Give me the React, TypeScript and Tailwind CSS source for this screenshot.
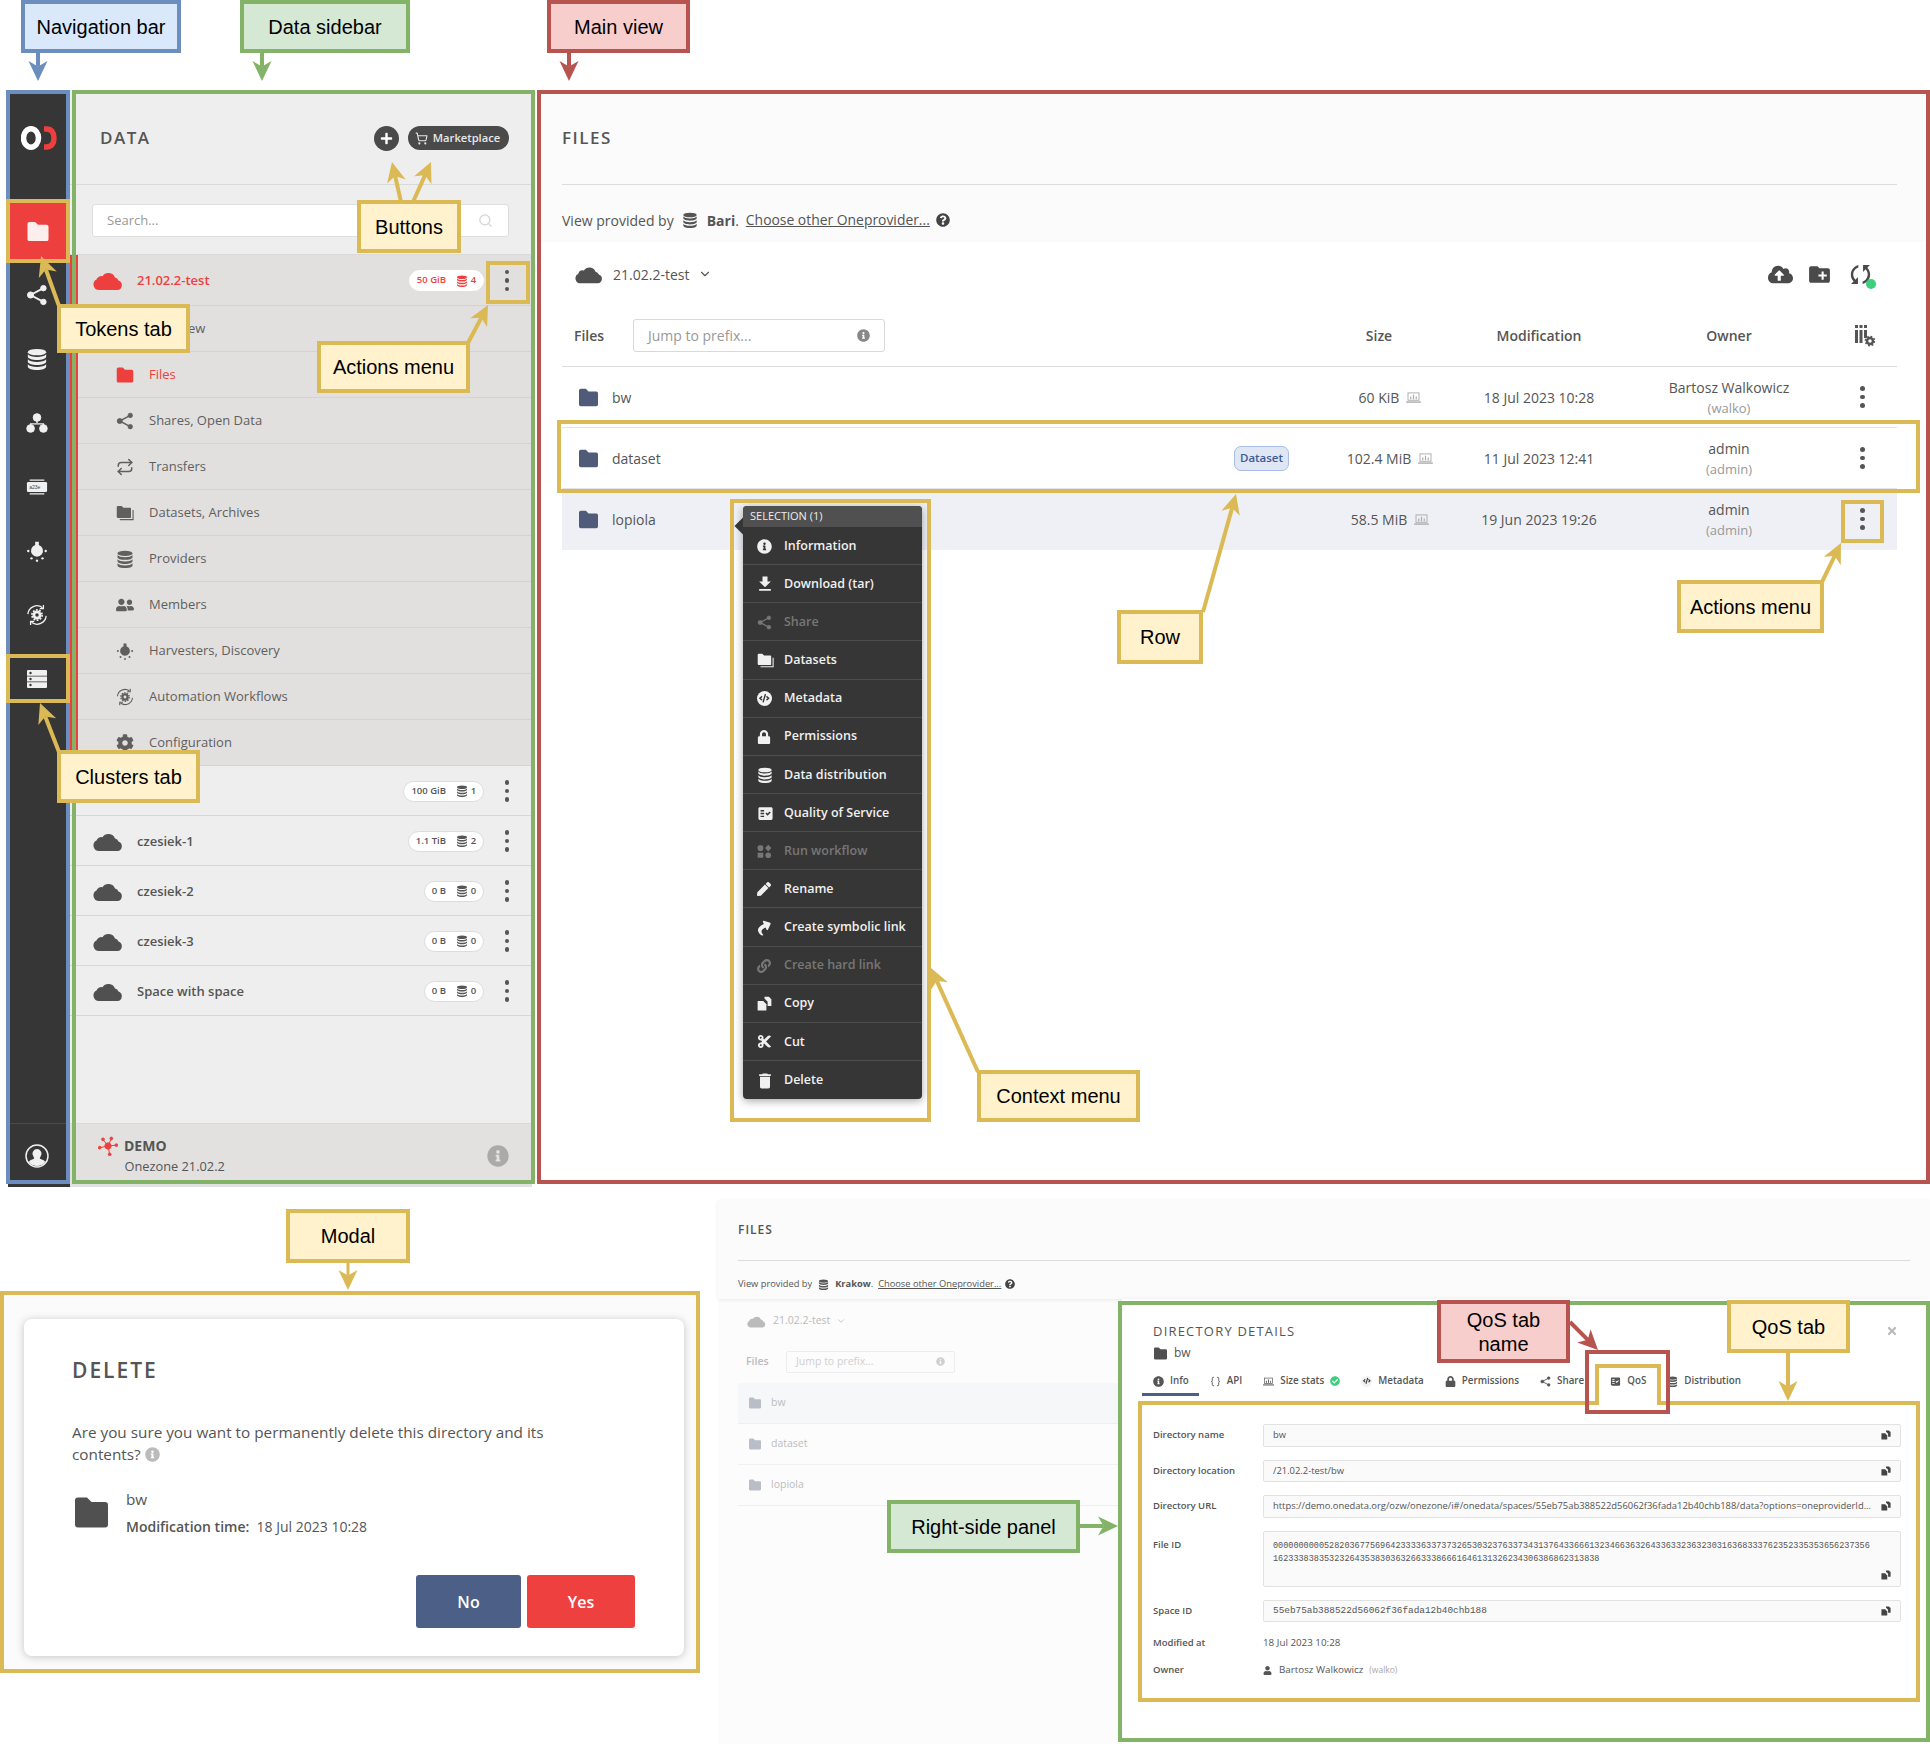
import React from "react";
import { Braces, ChevronDown, Repeat, Search, ShoppingCart } from "lucide-react";
import {
  FaCheckCircle,
  FaCloudUploadAlt,
  FaCode,
  FaCog,
  FaCut,
  FaInfoCircle,
  FaLink,
  FaLock,
  FaPen,
  FaPlus,
  FaQuestionCircle,
  FaShare,
  FaTimes,
  FaUser,
  FaUserFriends,
} from "react-icons/fa";
import { MdCreateNewFolder, MdDelete, MdFactCheck, MdFileDownload, MdSync } from "react-icons/md";

type IconProps = { className?: string };

const Folder = ({ className }: IconProps) => (
  <svg viewBox="0 0 24 22" fill="currentColor" className={className}>
    <path d="M1 3a2 2 0 0 1 2-2h6l3 3h9a2 2 0 0 1 2 2v13a2 2 0 0 1-2 2H3a2 2 0 0 1-2-2z" />
  </svg>
);

const Cloud = ({ className }: IconProps) => (
  <svg viewBox="0 0 30 19" fill="currentColor" className={className}>
    <path d="M6 19a5.500 5.500 0 0 1-2.500-10.400A5 5 0 0 1 9.500 5.200 7 7 0 0 1 22 6.500a4.500 4.500 0 0 1 3.500 3A4.900 4.900 0 0 1 24.500 19z" />
  </svg>
);

const Db = ({ className }: IconProps) => (
  <svg viewBox="0 0 24 24" fill="currentColor" className={className}>
    <ellipse cx="12" cy="4.500" rx="10" ry="3.500" />
    {[0, 5.500, 11].map((y) => (
      <path
        key={y}
        transform={`translate(0 ${y})`}
        d="M2 6.800c1.500 2 5.500 3 10 3s8.500-1 10-3v2.700c0 2-4.500 3.600-10 3.600S2 11.500 2 9.500z"
      />
    ))}
  </svg>
);

const Share = ({ className }: IconProps) => (
  <svg viewBox="0 0 24 24" fill="currentColor" stroke="currentColor" className={className}>
    <path d="M19 4.500 5 12l14 7.500" fill="none" strokeWidth="2" />
    <circle cx="19" cy="4.500" r="3" />
    <circle cx="5" cy="12" r="3.400" />
    <circle cx="19" cy="19.500" r="3" />
  </svg>
);

const ClusterDots = ({ className }: IconProps) => (
  <svg viewBox="0 0 24 24" fill="currentColor" stroke="currentColor" className={className}>
    <path d="M12 7v5M5 17v-4h14v4" fill="none" strokeWidth="1.500" />
    <circle cx="12" cy="6" r="4.200" />
    <circle cx="5" cy="18" r="4.200" />
    <circle cx="19" cy="18" r="4.200" />
  </svg>
);

const TokenIcon = ({ className }: IconProps) => (
  <svg viewBox="0 0 24 18" className={className}>
    <path d="M4 1.500h16M4 16.500h16" stroke="currentColor" strokeWidth="1.500" />
    <rect x="1" y="3.500" width="22" height="11" rx="1.500" fill="currentColor" />
    <text x="3.500" y="11" fontSize="5.500" fill="#444" fontFamily="Liberation Sans, sans-serif">
      a23e
    </text>
  </svg>
);

const Bulb = ({ className }: IconProps) => (
  <svg viewBox="0 0 24 24" fill="currentColor" className={className}>
    <path d="M10 2h4v3.500a6.500 6.500 0 1 1-4 0z" />
    <circle cx="2.500" cy="12" r="1.300" />
    <circle cx="21.500" cy="12" r="1.300" />
    <circle cx="6" cy="20" r="1.300" />
    <circle cx="18" cy="20" r="1.300" />
    <circle cx="12" cy="22.500" r="1.300" />
  </svg>
);

const WorkflowIcon = ({ className }: IconProps) => (
  <svg viewBox="0 0 24 24" fill="none" stroke="currentColor" className={className}>
    <path d="M2 11a10 10 0 0 1 16-7" strokeWidth="1.400" />
    <path d="M22 13a10 10 0 0 1-16 7" strokeWidth="1.400" />
    <path d="M19 1v4h-4M5 23v-4h4" strokeWidth="1.400" />
    <circle cx="12" cy="12" r="3.400" strokeWidth="3" />
    <circle cx="12" cy="12" r="5.600" strokeWidth="1.800" strokeDasharray="2 1.500" />
  </svg>
);

const ServerList = ({ className }: IconProps) => (
  <svg viewBox="0 0 22 18" fill="currentColor" className={className}>
    <path d="M1 1a1 1 0 0 1 1-1h18a1 1 0 0 1 1 1v4.800H1zM1 6.500h20v5H1zM1 12.200h20V17a1 1 0 0 1-1 1H2a1 1 0 0 1-1-1z" />
    <circle cx="4.500" cy="3" r="1.200" fill="#363636" />
    <circle cx="4.500" cy="9" r="1.200" fill="#363636" />
    <circle cx="4.500" cy="15" r="1.200" fill="#363636" />
  </svg>
);

const UserRound = ({ className }: IconProps) => (
  <svg viewBox="0 0 24 24" className={className}>
    <circle cx="12" cy="12" r="11" fill="#363636" stroke="currentColor" strokeWidth="1.500" />
    <path d="M12 5a4.500 4.500 0 0 1 4 6.500c-.5 1.500-1.200 2-1.200 3 1.500 1 4 1.200 5.500 3.500a10.500 10.500 0 0 1-16.600 0c1.500-2.300 4-2.500 5.500-3.500 0-1-.7-1.500-1.200-3A4.500 4.500 0 0 1 12 5z" fill="currentColor" />
  </svg>
);

const DemoMark = ({ className }: IconProps) => (
  <svg viewBox="0 0 24 24" fill="currentColor" stroke="currentColor" className={className}>
    <path d="M12 12 6 4M12 12l4-9M12 12l10-1M12 12l2 10M12 12 2 14" strokeWidth="1.200" />
    <circle cx="12" cy="12" r="3.800" />
    <circle cx="6" cy="4" r="1.700" />
    <circle cx="16" cy="3" r="1.700" />
    <circle cx="22" cy="11" r="1.700" />
    <circle cx="14" cy="22" r="1.700" />
    <circle cx="2" cy="14" r="1.700" />
  </svg>
);

const DatasetStack = ({ className }: IconProps) => (
  <svg viewBox="0 0 24 22" fill="currentColor" className={className}>
    <path d="M1 3a1.500 1.500 0 0 1 1.500-1.500h5L10 4h9a1 1 0 0 1 1 1v11.500a1 1 0 0 1-1 1H2.500A1.500 1.500 0 0 1 1 16z" />
    <path d="M22 7h1.500v13.500H5V19h17z" />
  </svg>
);

const SizeIcon = ({ className }: IconProps) => (
  <svg viewBox="0 0 16 12" fill="none" stroke="currentColor" className={className}>
    <rect x="2" y="1" width="12" height="8" strokeWidth="1" />
    <path d="M0 11h16" strokeWidth="1.500" />
    <path d="M5 8V5M8 8V3M11 8V5" strokeWidth="1.300" />
  </svg>
);

const ColumnsGear = ({ className }: IconProps) => (
  <svg viewBox="0 0 20 22" fill="currentColor" className={className}>
    <rect x="0" y="0" width="3" height="3" />
    <rect x="4.500" y="0" width="3" height="3" />
    <rect x="9" y="0" width="3" height="3" />
    <rect x="0" y="5" width="3" height="13" />
    <rect x="4.500" y="5" width="3" height="13" />
    <rect x="9" y="5" width="3" height="8" />
    <circle cx="15" cy="16" r="3" fill="none" stroke="currentColor" strokeWidth="2.500" />
    <circle cx="15" cy="16" r="4.600" fill="none" stroke="currentColor" strokeWidth="1.600" strokeDasharray="1.800 1.800" />
  </svg>
);

const RunIcon = ({ className }: IconProps) => (
  <svg viewBox="0 0 24 24" fill="currentColor" className={className}>
    <rect x="1" y="2" width="9" height="9" rx="3" />
    <path d="m18 1 5 5.500-5 5.500-5-5.500z" />
    <rect x="1" y="14" width="9" height="8" rx="1" />
    <circle cx="18" cy="18" r="4.500" />
  </svg>
);

// two overlapping sheets, as on the copy buttons
const CopyIcon = ({ className }: IconProps) => (
  <svg viewBox="0 0 24 24" fill="currentColor" className={className}>
    <path d="M12 1h7l4 4v11h-6V9l-5-5z" />
    <path d="M1 8h9l5 5v10H1z" />
  </svg>
);

const Metadata = ({ className }: IconProps) => (
  <span className={`flex items-center justify-center rounded-full bg-[#f2f2f2] ${className}`}>
    <FaCode className="size-[70%] text-[#363636]" />
  </span>
);

const Dots = ({ className = "" }: IconProps) => (
  <span className={`flex flex-col items-center gap-[4px] ${className}`}>
    <i className="size-[4.500px] rounded-full bg-current" />
    <i className="size-[4.500px] rounded-full bg-current" />
    <i className="size-[4.500px] rounded-full bg-current" />
  </span>
);

const Logo = () => (
  <svg viewBox="0 0 36 24" className="h-[24px] w-[36px]" fill="none" strokeWidth="5.500">
    <ellipse cx="10" cy="12" rx="7.500" ry="9.200" stroke="#fff" />
    <path d="M23 3h2.500c5 0 7.500 3.500 7.500 9s-2.500 9-7.500 9H23" stroke="#ee3f3f" />
  </svg>
);

const navItems = [Share, Db, ClusterDots, TokenIcon, Bulb, WorkflowIcon, ServerList];

const NavBar = () => (
  <aside className="flex h-[1097px] w-[62px] shrink-0 flex-col bg-[#363636] text-[#f0f0f0]">
    <div className="flex h-[109px] items-start justify-center pt-[36px]">
      <Logo />
    </div>
    <div className="flex h-[64px] items-center justify-center bg-[#ee3f3f] pr-[3px]">
      <Folder className="h-[21px] w-[24px] text-[#fdeeee]" />
    </div>
    {navItems.map((Icon, i) => (
      <div key={i} className="flex h-[64px] items-center justify-center pr-[4px]">
        <Icon className="h-[22px] w-[22px]" />
      </div>
    ))}
    <div className="mt-auto flex h-[64px] items-center justify-center border-t border-[#4a4a4a] pr-[4px]">
      <UserRound className="size-[24px]" />
    </div>
  </aside>
);

const Pill = ({ size, count, active }: { size: string; count: number; active?: boolean }) => (
  <span
    className={`flex h-[21px] items-center rounded-full border bg-white pl-[7px] pr-[6px] text-[9.500px] font-semibold ${
      active ? "border-white text-[#ee3f3f]" : "border-[#dcdcdc] text-[#555]"
    }`}
  >
    {size}
    <Db className="ml-[10px] size-[12px]" />
    <span className="ml-[2px] w-[7px] text-center">{count}</span>
  </span>
);

const spaces = [
  { name: "demo", size: "100 GiB", count: 1 },
  { name: "czesiek-1", size: "1.1 TiB", count: 2 },
  { name: "czesiek-2", size: "0 B", count: 0 },
  { name: "czesiek-3", size: "0 B", count: 0 },
  { name: "Space with space", size: "0 B", count: 0 },
];

const subItems = [
  { label: "Overview", icon: FaInfoCircle },
  { label: "Files", icon: Folder, active: true },
  { label: "Shares, Open Data", icon: Share },
  { label: "Transfers", icon: Repeat },
  { label: "Datasets, Archives", icon: DatasetStack },
  { label: "Providers", icon: Db },
  { label: "Members", icon: FaUserFriends },
  { label: "Harvesters, Discovery", icon: Bulb },
  { label: "Automation Workflows", icon: WorkflowIcon },
  { label: "Configuration", icon: FaCog },
];

const SideBar = () => (
  <aside className="flex h-[1097px] w-[462px] shrink-0 flex-col bg-[#eeeeee] text-[#555]">
    <div className="flex h-[95px] items-center justify-between border-b border-[#d9d9d9] pl-[30px] pr-[23px] pt-[2px]">
      <h2 className="text-[17px] font-semibold tracking-[1.500px]">DATA</h2>
      <div className="flex items-center gap-[9px]">
        <span className="flex size-[25px] items-center justify-center rounded-full bg-[#4a4a4a] text-white">
          <FaPlus className="size-[13px]" />
        </span>
        <span className="flex h-[24px] w-[101px] items-center justify-center gap-[5px] rounded-full bg-[#4a4a4a] pr-[2px] text-[11.200px] font-semibold text-[#e8e8e8]">
          <ShoppingCart className="size-[13px]" />
          Marketplace
        </span>
      </div>
    </div>
    <div className="flex h-[70px] items-center border-b border-[#d9d9d9] pl-[22px] pr-[23px] pt-[2px]">
      <div className="flex h-[33px] flex-1 items-center justify-between rounded-[3px] border border-[#dedede] bg-white pl-[14px] pr-[15px] text-[13px] text-[#999]">
        Search...
        <Search className="size-[15px] text-[#d4d4d4]" />
      </div>
    </div>
    <div className="border-l-[8px] border-[#ee3f3f] bg-[#e1e0de]">
      <div className="flex h-[51px] items-center border-b border-[#d4d3d1] pl-[15px] pt-[1px]">
        <Cloud className="h-[19px] w-[30px] text-[#ee3f3f]" />
        <span className="ml-[14px] flex-1 text-[13px] font-semibold text-[#ee3f3f]">21.02.2-test</span>
        <Pill size="50 GiB" count={4} active />
        <span className="flex w-[48px] justify-center pr-[2px] text-[#555]">
          <Dots />
        </span>
      </div>
      {subItems.map(({ label, icon: Icon, active }) => (
        <div
          key={label}
          className={`flex h-[46px] items-center gap-[13px] border-b border-[#d4d3d1] pl-[36px] pt-[1px] text-[13px] ${
            active ? "text-[#ee3f3f]" : "text-[#5f5f5f]"
          }`}
        >
          <span className="flex w-[22px] justify-center">
            <Icon className="size-[18px]" />
          </span>
          {label}
        </div>
      ))}
    </div>
    {spaces.map((s) => (
      <div key={s.name} className="flex h-[50px] items-center border-b border-[#d6d6d6] pl-[23px] pt-[1px]">
        <Cloud className="h-[19px] w-[30px] text-[#505050]" />
        <span className="ml-[14px] flex-1 pt-[1px] text-[13px] font-semibold">{s.name}</span>
        <Pill size={s.size} count={s.count} />
        <span className="flex w-[48px] justify-center pr-[2px]">
          <Dots />
        </span>
      </div>
    ))}
    <div className="mt-auto flex h-[64px] items-center border-t border-[#d9d9d9] bg-[#e2e1df] pl-[28px] pr-[23px]">
      <div className="flex-1">
        <div className="flex items-center gap-[6px] text-[14px] font-bold leading-[20px]">
          <DemoMark className="size-[20px] text-[#ee3f3f]" />
          DEMO
        </div>
        <div className="pl-[26.500px] text-[12.800px] leading-[20px]">Onezone 21.02.2</div>
      </div>
      <FaInfoCircle className="size-[22px] text-[#aaa]" />
    </div>
  </aside>
);

const files = [
  { name: "bw", size: "60 KiB", date: "18 Jul 2023 10:28", owner: "Bartosz Walkowicz", login: "(walko)" },
  { name: "dataset", size: "102.4 MiB", date: "11 Jul 2023 12:41", owner: "admin", login: "(admin)", badge: true },
  { name: "lopiola", size: "58.5 MiB", date: "19 Jun 2023 19:26", owner: "admin", login: "(admin)", selected: true },
];

const MainView = () => (
  <main className="flex h-[1094px] flex-1 flex-col bg-white text-[#555]">
    <div className="h-[152px] bg-[#fbfbfb] pl-[25px] pr-[33px]">
      <div className="flex h-[95px] items-center border-b border-[#dcdcdc] pt-[2px]">
        <h2 className="text-[17px] font-semibold tracking-[1.500px]">FILES</h2>
      </div>
      <div className="flex h-[57px] items-center pt-[13px] text-[14px]">
        View provided by
        <Db className="ml-[8px] size-[16px]" />
        <b className="ml-[9px] font-bold">Bari</b>.
        <u className="ml-[7px] text-[13.900px]">Choose other Oneprovider...</u>
        <FaQuestionCircle className="ml-[6px] size-[14px] text-[#444]" />
      </div>
    </div>
    <div className="flex-1 pl-[25px] pr-[33px]">
      <div className="flex h-[64px] items-center pl-[13px] pr-[22px] text-[14px]">
        <Cloud className="h-[19px] w-[28px] text-[#505050]" />
        <span className="ml-[10px]">21.02.2-test</span>
        <ChevronDown className="ml-[9px] size-[14px]" />
        <FaCloudUploadAlt className="ml-auto size-[25px] text-[#4a4a4a]" />
        <MdCreateNewFolder className="ml-[14px] size-[25px] text-[#4a4a4a]" />
        <span className="relative ml-[14px]">
          <MdSync className="size-[29px] rotate-45 text-[#4a4a4a]" />
          <i className="absolute bottom-[0px] -right-[1px] size-[10px] rounded-full bg-[#3ccf7e]" />
        </span>
      </div>
      <div className="flex h-[61px] items-center border-b border-[#dcdcdc] pb-[1px] text-[14px] font-semibold">
        <div className="flex w-[737px] items-center pl-[12px]">
          <span className="w-[59px]">Files</span>
          <span className="flex h-[33px] w-[252px] items-center justify-between rounded-[3px] border border-[#d9d9d9] px-[14px] font-normal text-[#999]">
            Jump to prefix...
            <FaInfoCircle className="size-[13px] text-[#888]" />
          </span>
        </div>
        <span className="w-[160px] text-center">Size</span>
        <span className="w-[160px] text-center">Modification</span>
        <span className="w-[220px] text-center">Owner</span>
        <span className="flex w-[58px] justify-center pr-[6px]">
          <ColumnsGear className="h-[22px] w-[20px]" />
        </span>
      </div>
      {files.map((f) => (
        <div
          key={f.name}
          className={`flex h-[61px] items-center border-b text-[14px] ${
            f.selected ? "border-[#eff0f5] bg-[#eff0f5]" : "border-[#e4e4e4]"
          }`}
        >
          <div className="flex w-[737px] items-center pl-[16px] pr-[10px]">
            <Folder className="h-[19px] w-[21px] text-[#4f5b78]" />
            <span className="ml-[13px] flex-1">{f.name}</span>
            {f.badge && (
              <span className="flex h-[25px] w-[55px] items-center justify-center rounded-[7px] border border-[#a9bde6] bg-[#dfe6f4] text-[11.500px] font-semibold text-[#3c5a94]">
                Dataset
              </span>
            )}
          </div>
          <span className="flex w-[160px] items-center justify-center gap-[7px] pl-[22px]">
            {f.size}
            <SizeIcon className="h-[11px] w-[15px] text-[#aaa]" />
          </span>
          <span className="w-[160px] text-center">{f.date}</span>
          <span className="w-[220px] pt-[1px] text-center leading-[20px]">
            {f.owner}
            <br />
            <span className="text-[13px] text-[#999]">{f.login}</span>
          </span>
          <span className="flex w-[58px] justify-center pr-[11px]">
            <Dots />
          </span>
        </div>
      ))}
    </div>
  </main>
);

const menuItems = [
  { label: "Information", icon: FaInfoCircle, size: "size-[15px]" },
  { label: "Download (tar)", icon: MdFileDownload, size: "size-[20px] -ml-[2px]" },
  { label: "Share", icon: Share, off: true, size: "size-[15px]" },
  { label: "Datasets", icon: DatasetStack, size: "size-[17px]" },
  { label: "Metadata", icon: Metadata, size: "size-[15px]" },
  { label: "Permissions", icon: FaLock, size: "size-[14px]" },
  { label: "Data distribution", icon: Db, size: "size-[16px]" },
  { label: "Quality of Service", icon: MdFactCheck, size: "size-[17px]" },
  { label: "Run workflow", icon: RunIcon, off: true, size: "size-[15px]" },
  { label: "Rename", icon: FaPen, size: "size-[14px]" },
  { label: "Create symbolic link", icon: FaShare, size: "size-[15px] -rotate-[25deg]" },
  { label: "Create hard link", icon: FaLink, off: true, size: "size-[14px]" },
  { label: "Copy", icon: CopyIcon, size: "size-[15px]" },
  { label: "Cut", icon: FaCut, size: "size-[15px]" },
  { label: "Delete", icon: MdDelete, size: "size-[20px] -ml-[2px]" },
];

const ContextMenu = () => (
  <div className="absolute left-[743px] top-[506px] w-[179px] rounded-[4px] bg-[#363636] shadow-[0_2px_8px_rgba(0,0,0,0.35)]">
    <i className="absolute -left-[6px] top-[14px] size-[12px] rotate-45 bg-[#363636]" />
    <div className="relative h-[21px] rounded-t-[4px] bg-[#505050] pl-[7px] text-[11px] leading-[19px] text-[#eee]">
      SELECTION (1)
    </div>
    {menuItems.map(({ label, icon: Icon, off, size }) => (
      <div
        key={label}
        className={`flex h-[38.150px] items-center border-b border-[#4d4d4d] pl-[14px] pt-[1px] text-[12.500px] font-semibold last:border-b-0 ${
          off ? "text-[#777]" : "text-[#f0f0f0]"
        }`}
      >
        <span className="flex w-[27px] items-center justify-start">
          <Icon className={size} />
        </span>
        {label}
      </div>
    ))}
  </div>
);

const Modal = () => (
  <section className="mt-[91px] h-[382px] w-[700px] shrink-0 bg-[#fbfbfb] pl-[24px] pr-[16px] pt-[28px]">
    <div className="flex h-[337px] flex-col rounded-[8px] bg-white pl-[48px] pr-[49px] text-[#555] shadow-[0_1px_8px_rgba(0,0,0,0.22)]">
      <h2 className="mt-[37px] text-[21px] font-semibold leading-[28px] tracking-[2px]">DELETE</h2>
      <p className="mt-[37px] w-[500px] text-[15.300px] leading-[22px]">
        Are you sure you want to permanently delete this directory and its contents?{" "}
        <FaInfoCircle className="inline size-[15px] align-[-2px] text-[#bbb]" />
      </p>
      <div className="mt-[22px] flex items-center">
        <Folder className="h-[33px] w-[39px] text-[#505050]" />
        <div className="ml-[15px] text-[14px]">
          <div className="text-[15.300px] leading-[24px]">bw</div>
          <div className="mt-[5px] leading-[22px]">
            <b className="font-semibold">Modification time:</b>&nbsp; 18 Jul 2023 10:28
          </div>
        </div>
      </div>
      <div className="mt-auto mb-[28px] flex justify-end gap-[6px]">
        <span className="flex h-[53px] w-[105px] items-center justify-center rounded-[3px] bg-[#4b5f87] text-[16px] font-semibold text-white">
          No
        </span>
        <span className="flex h-[53px] w-[108px] items-center justify-center rounded-[3px] bg-[#ef4040] text-[16px] font-semibold text-white">
          Yes
        </span>
      </div>
    </div>
  </section>
);

const detailTabs = [
  { label: "Info", icon: FaInfoCircle, active: true },
  { label: "API", icon: Braces },
  { label: "Size stats", icon: SizeIcon, check: true },
  { label: "Metadata", icon: Metadata },
  { label: "Permissions", icon: FaLock },
  { label: "Share", icon: Share },
  { label: "QoS", icon: MdFactCheck, extra: "ml-[5px]" },
  { label: "Distribution", icon: Db },
];

const CopyBtn = () => <CopyIcon className="size-[10px] shrink-0 text-[#444]" />;

const Field = ({ label, value, mono }: { label: string; value: string; mono?: boolean }) => (
  <div className="mb-[13px] flex items-center">
    <span className="w-[110px] text-[9.500px] font-semibold">{label}</span>
    <div
      className={`flex h-[22.500px] w-[638px] items-center justify-between rounded-[2px] border border-[#e2e2e2] bg-[#fafafa] pl-[9px] pr-[9px] text-[9.400px] ${
        mono ? "font-['Liberation_Mono',monospace]" : ""
      }`}
    >
      <span className="truncate pr-[4px]">{value}</span>
      <CopyBtn />
    </div>
  </div>
);

const FadedRow = ({ name, selected }: { name: string; selected?: boolean }) => (
  <div className={`flex h-[41px] items-center gap-[9px] border-b border-[#f0f0f0] pl-[10px] text-[10.500px] text-[#bdbdbd] ${selected ? "bg-[#f6f7f9]" : ""}`}>
    <Folder className="h-[12px] w-[14px] text-[#b9bdc7]" />
    {name}
  </div>
);

const DetailsPanel = () => (
  <section className="flex h-[544px] flex-1 flex-col bg-[#fcfcfc] text-[#555]">
    <div className="h-[99px] bg-[#fbfbfb] pl-[20px] pr-[20px] shadow-[0_1px_4px_rgba(0,0,0,0.08)]">
      <div className="flex h-[61px] items-center border-b border-[#dcdcdc]">
        <h3 className="text-[12px] font-semibold tracking-[1px]">FILES</h3>
      </div>
      <div className="flex h-[38px] items-center pt-[8px] text-[9.300px]">
        View provided by
        <Db className="ml-[6px] size-[11px]" />
        <b className="ml-[6px] font-bold">Krakow</b>.
        <u className="ml-[5px]">Choose other Oneprovider...</u>
        <FaQuestionCircle className="ml-[4px] size-[10px] text-[#444]" />
      </div>
    </div>
    <div className="flex flex-1">
      <div className="w-[404px] shrink-0 pl-[20px]">
        <div className="flex h-[44px] items-center pl-[9px] text-[10.500px] text-[#bbb]">
          <Cloud className="h-[13px] w-[19px] text-[#bbb]" />
          <span className="ml-[7px]">21.02.2-test</span>
          <ChevronDown className="ml-[6px] size-[10px]" />
        </div>
        <div className="flex h-[40px] items-center pb-[3px] pl-[8px] text-[10.500px] font-semibold text-[#bbb]">
          <span className="w-[40px]">Files</span>
          <span className="flex h-[22px] w-[169px] items-center justify-between rounded-[2px] border border-[#ececec] px-[9px] font-normal text-[#d0d0d0]">
            Jump to prefix...
            <FaInfoCircle className="size-[9px]" />
          </span>
        </div>
        <FadedRow name="bw" selected />
        <FadedRow name="dataset" />
        <FadedRow name="lopiola" />
      </div>
      <div className="flex-1 bg-white pl-[31px] pr-[29px] shadow-[-2px_0_6px_rgba(0,0,0,0.05)]">
        <div className="flex items-center justify-between pt-[24px]">
          <h3 className="text-[13px] font-medium leading-[16px] tracking-[1.200px]">DIRECTORY DETAILS</h3>
          <FaTimes className="mr-[3px] size-[12px] text-[#bbb]" />
        </div>
        <div className="mt-[6px] flex items-center gap-[6px] text-[12px] leading-[16px]">
          <Folder className="h-[13px] w-[15px] text-[#505050]" />
          bw
        </div>
        <div className="relative mt-[12px] flex h-[22px] items-start gap-[21px] text-[9.800px] font-semibold">
          {detailTabs.map(({ label, icon: Icon, check, active, extra }) => (
            <span key={label} className={`relative flex items-center gap-[6px] whitespace-nowrap leading-[16px] ${extra ?? ""}`}>
              <Icon className="size-[11px]" />
              {label}
              {check && <FaCheckCircle className="size-[10px] text-[#3ccf7e]" />}
              {active && <i className="absolute -left-[11px] -right-[10px] top-[20px] h-[3px] bg-[#4b5f87]" />}
            </span>
          ))}
        </div>
        <div className="mt-[29px]">
          <Field label="Directory name" value="bw" />
          <Field label="Directory location" value="/21.02.2-test/bw" />
          <Field
            label="Directory URL"
            value="https://demo.onedata.org/ozw/onezone/i#/onedata/spaces/55eb75ab388522d56062f36fada12b40chb188/data?options=oneproviderId..."
          />
          <div className="mb-[13px] flex items-start">
            <span className="w-[110px] pt-[7px] text-[9.500px] font-semibold">File ID</span>
            <div className="relative h-[56px] w-[638px] whitespace-nowrap rounded-[2px] border border-[#e2e2e2] bg-[#fafafa] px-[9px] pt-[8px] font-['Liberation_Mono',monospace] text-[8.500px] leading-[13px]">
              000000000052820367756964233336337373265303237633734313764336661323466363264336332363230316368333762352335353656237356
              <br />
              1623338383532326435383036326633386661646131326234306386862313838
              <span className="absolute bottom-[6px] right-[9px]">
                <CopyBtn />
              </span>
            </div>
          </div>
          <Field label="Space ID" value="55eb75ab388522d56062f36fada12b40chb188" mono />
          <div className="-mt-[2px] flex h-[20px] items-center text-[9.800px]">
            <span className="w-[110px] text-[9.500px] font-semibold">Modified at</span>
            18 Jul 2023 10:28
          </div>
          <div className="mt-[7px] flex h-[20px] items-center text-[9.800px]">
            <span className="w-[110px] text-[9.500px] font-semibold">Owner</span>
            <FaUser className="mr-[7px] size-[9px]" />
            Bartosz Walkowicz
            <span className="ml-[6px] text-[8.500px] text-[#aaa]">(walko)</span>
          </div>
        </div>
      </div>
    </div>
  </section>
);

// annotation layer: the draw.io labels and frames on top of the screenshots
const tones = {
  blue: "border-[#6c8ebf] bg-[#dae8fc]",
  green: "border-[#82b366] bg-[#d5e8d4]",
  red: "border-[#b85450] bg-[#f8cecc]",
  gold: "border-[#dbb954] bg-[#fff2cc]",
};

const Callout = ({ tone, className, children }: { tone: keyof typeof tones; className: string; children: React.ReactNode }) => (
  <div
    className={`absolute flex items-center justify-center border-4 text-center font-['Liberation_Sans',sans-serif] text-[20px] leading-[24px] text-black ${tones[tone]} ${className}`}
  >
    {children}
  </div>
);

const Frame = ({ className }: { className: string }) => <div className={`pointer-events-none absolute border-4 ${className}`} />;

const Arrow = ({ from, to, color, w = 4 }: { from: [number, number]; to: [number, number]; color: string; w?: number }) => {
  const [x1, y1] = from;
  const [x2, y2] = to;
  const len = Math.hypot(x2 - x1, y2 - y1);
  const ux = (x2 - x1) / len;
  const uy = (y2 - y1) / len;
  const L = 20;
  const W = 9.5;
  const bx = x2 - ux * L;
  const by = y2 - uy * L;
  const nx = x2 - ux * L * 0.72;
  const ny = y2 - uy * L * 0.72;
  const pts = `${x2},${y2} ${bx - uy * W},${by + ux * W} ${nx},${ny} ${bx + uy * W},${by - ux * W}`;
  return (
    <g>
      <line x1={x1} y1={y1} x2={nx} y2={ny} stroke={color} strokeWidth={w} />
      <polygon points={pts} fill={color} />
    </g>
  );
};

const GOLD = "#dbb954";
const BLUE = "#6c8ebf";
const GREEN = "#82b366";
const RED = "#b85450";

const Annotations = () => (
  <>
    <Frame className="left-[6px] top-[90px] h-[1094px] w-[64px] border-[#6c8ebf]" />
    <Frame className="left-[72px] top-[90px] h-[1094px] w-[463px] border-[#82b366]" />
    <Frame className="left-[537px] top-[90px] h-[1094px] w-[1393px] border-[#b85450]" />
    <Frame className="left-[6px] top-[199px] h-[64px] w-[64px] border-[#dbb954]" />
    <Frame className="left-[6px] top-[654px] h-[49px] w-[64px] border-[#dbb954]" />
    <Frame className="left-[486px] top-[261px] h-[43px] w-[44px] border-[#dbb954]" />
    <Frame className="left-[557px] top-[420px] h-[73px] w-[1363px] border-[#dbb954]" />
    <Frame className="left-[1841px] top-[500px] h-[43px] w-[43px] border-[#dbb954]" />
    <Frame className="left-[730px] top-[499px] h-[623px] w-[201px] border-[#dbb954]" />
    <Frame className="left-[0px] top-[1291px] h-[382px] w-[700px] border-[#dbb954]" />
    <Frame className="left-[1118px] top-[1301px] h-[441px] w-[812px] border-[#82b366]" />

    <svg viewBox="0 0 1930 1744" className="pointer-events-none absolute left-0 top-0 h-[1744px] w-[1930px]">
      <path d="M1140 1403H1597V1366H1659V1403H1918V1700H1140Z" fill="none" stroke={GOLD} strokeWidth="4" />
      <rect x="1587" y="1352" width="81" height="60" fill="none" stroke={RED} strokeWidth="4" />
      <Arrow from={[38, 53]} to={[38, 81]} color={BLUE} />
      <Arrow from={[262, 53]} to={[262, 81]} color={GREEN} />
      <Arrow from={[569, 53]} to={[569, 81]} color={RED} />
      <Arrow from={[401, 202]} to={[392, 162]} color={GOLD} />
      <Arrow from={[413, 202]} to={[431, 162]} color={GOLD} />
      <Arrow from={[59, 306]} to={[41, 256]} color={GOLD} />
      <Arrow from={[468, 343]} to={[488, 305]} color={GOLD} />
      <Arrow from={[59, 752]} to={[40, 703]} color={GOLD} />
      <Arrow from={[1203, 612]} to={[1236, 494]} color={GOLD} />
      <Arrow from={[1822, 582]} to={[1841, 543]} color={GOLD} />
      <Arrow from={[978, 1072]} to={[931, 968]} color={GOLD} />
      <Arrow from={[348, 1263]} to={[348, 1290]} color={GOLD} w={3} />
      <Arrow from={[1788, 1353]} to={[1788, 1401]} color={GOLD} />
      <Arrow from={[1570, 1322]} to={[1598, 1350]} color={RED} />
      <Arrow from={[1080, 1526]} to={[1118, 1526]} color={GREEN} />
    </svg>

    <Callout tone="blue" className="left-[21px] top-0 h-[53px] w-[160px]">Navigation bar</Callout>
    <Callout tone="green" className="left-[240px] top-0 h-[53px] w-[170px]">Data sidebar</Callout>
    <Callout tone="red" className="left-[547px] top-0 h-[53px] w-[143px]">Main view</Callout>
    <Callout tone="gold" className="left-[357px] top-[200px] h-[53px] w-[104px]">Buttons</Callout>
    <Callout tone="gold" className="left-[57px] top-[304px] h-[49px] w-[133px]">Tokens tab</Callout>
    <Callout tone="gold" className="left-[317px] top-[341px] h-[52px] w-[153px]">Actions menu</Callout>
    <Callout tone="gold" className="left-[57px] top-[750px] h-[53px] w-[143px]">Clusters tab</Callout>
    <Callout tone="gold" className="left-[1117px] top-[610px] h-[54px] w-[86px]">Row</Callout>
    <Callout tone="gold" className="left-[1677px] top-[580px] h-[53px] w-[147px]">Actions menu</Callout>
    <Callout tone="gold" className="left-[977px] top-[1070px] h-[52px] w-[163px]">Context menu</Callout>
    <Callout tone="gold" className="left-[286px] top-[1209px] h-[54px] w-[124px]">Modal</Callout>
    <Callout tone="green" className="left-[887px] top-[1500px] h-[53px] w-[193px]">Right-side panel</Callout>
    <Callout tone="red" className="left-[1437px] top-[1300px] h-[63px] w-[133px]">QoS tab<br />name</Callout>
    <Callout tone="gold" className="left-[1727px] top-[1300px] h-[53px] w-[123px]">QoS tab</Callout>
  </>
);

export default function App() {
  return (
    <div className="relative h-[1744px] w-[1930px] overflow-hidden bg-white font-['Open_Sans',sans-serif]">
      <div className="flex pl-[8px] pt-[90px]">
        <NavBar />
        <SideBar />
        <div className="w-[5px] shrink-0" />
        <MainView />
      </div>
      <div className="flex gap-[18px] pt-[13px]">
        <Modal />
        <DetailsPanel />
      </div>
      <ContextMenu />
      <Annotations />
    </div>
  );
}
